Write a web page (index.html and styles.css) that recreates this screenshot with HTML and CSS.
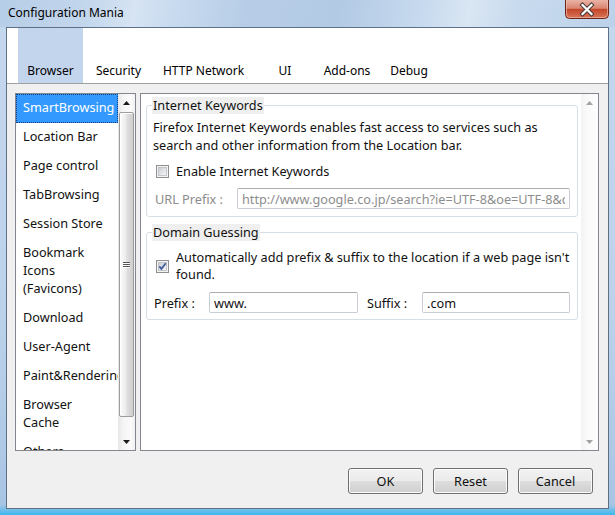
FILE: index.html
```html
<!DOCTYPE html>
<html>
<head>
<meta charset="utf-8">
<title>Configuration Mania</title>
<link rel="stylesheet" href="styles.css">
</head>
<body>
<div class="window">
  <div class="titlebar">
    <span class="title">Configuration Mania</span>
    <svg class="close" width="44" height="19" viewBox="0 0 44 19">
      <defs>
        <linearGradient id="cg" x1="0" y1="0" x2="0" y2="1">
          <stop offset="0" stop-color="#eab3a6"/>
          <stop offset="0.45" stop-color="#d98470"/>
          <stop offset="0.5" stop-color="#c4462a"/>
          <stop offset="1" stop-color="#d9775a"/>
        </linearGradient>
      </defs>
      <path d="M0.5 0 V14.5 Q0.5 18.5 4.5 18.5 H39.5 Q43.5 18.5 43.5 14.5 V0" fill="url(#cg)" stroke="#6a2517"/>
      <path d="M1.5 0 V14 Q1.5 17.5 5 17.5 H39 Q42.5 17.5 42.5 14 V0" fill="none" stroke="#f2c3b6" stroke-opacity="0.6"/>
      <path d="M17.5 5 L26.5 14 M26.5 5 L17.5 14" stroke="#4a3a36" stroke-width="4.2" stroke-linecap="square"/>
      <path d="M17.5 5 L26.5 14 M26.5 5 L17.5 14" stroke="#ffffff" stroke-width="2.2" stroke-linecap="square"/>
    </svg>
  </div>
  <div class="client">
    <div class="tabbar">
      <div class="tab tab-browser tab-sel">Browser</div>
      <div class="tab tab-security">Security</div>
      <div class="tab tab-http">HTTP Network</div>
      <div class="tab tab-ui">UI</div>
      <div class="tab tab-addons">Add-ons</div>
      <div class="tab tab-debug">Debug</div>
    </div>
    <div class="main">
      <div class="list">
        <div class="items">
          <div class="item item-sel">SmartBrowsing</div>
          <div class="item">Location Bar</div>
          <div class="item">Page control</div>
          <div class="item">TabBrowsing</div>
          <div class="item">Session Store</div>
          <div class="item">Bookmark<br>Icons<br>(Favicons)</div>
          <div class="item">Download</div>
          <div class="item">User-Agent</div>
          <div class="item">Paint&amp;Rendering</div>
          <div class="item">Browser<br>Cache</div>
          <div class="item">Others</div>
        </div>
        <div class="sb">
          <div class="sb-btn"><svg width="7" height="4" viewBox="0 0 7 4"><path d="M0 4 L3.5 0 L7 4 Z" fill="#1a1a1a"/></svg></div>
          <div class="sb-track">
            <div class="sb-thumb">
              <div class="grip"><i></i><i></i><i></i></div>
            </div>
          </div>
          <div class="sb-btn"><svg width="7" height="4" viewBox="0 0 7 4"><path d="M0 0 L3.5 4 L7 0 Z" fill="#1a1a1a"/></svg></div>
        </div>
      </div>
      <div class="panel">
        <div class="panel-content">
          <fieldset class="group">
            <legend>Internet Keywords</legend>
            <p class="desc">Firefox Internet Keywords enables fast access to services such as<br>search and other information from the Location bar.</p>
            <div class="check-row">
              <svg class="cb" width="13" height="13" viewBox="0 0 13 13">
                <defs>
                  <linearGradient id="cbg1" x1="0" y1="0" x2="1" y2="1">
                    <stop offset="0" stop-color="#c9ccd2"/>
                    <stop offset="1" stop-color="#f7f7f7"/>
                  </linearGradient>
                </defs>
                <rect x="0.5" y="0.5" width="12" height="12" fill="#f4f4f4" stroke="#8f8f8f"/>
                <rect x="2.5" y="2.5" width="8" height="8" fill="url(#cbg1)" stroke="#b8bcc2" stroke-width="0.8"/>
              </svg>
              <span class="check-label">Enable Internet Keywords</span>
            </div>
            <div class="field-row field-row-url">
              <span class="flabel flabel-url disabled">URL Prefix :</span>
              <input class="tbox tbox-url" type="text" value="http://www.google.co.jp/search?ie=UTF-8&amp;oe=UTF-8&amp;q=" readonly>
            </div>
          </fieldset>
          <fieldset class="group group-domain">
            <legend>Domain Guessing</legend>
            <div class="check-row check-row-multi">
              <svg class="cb" width="13" height="13" viewBox="0 0 13 13">
                <defs>
                  <linearGradient id="cbg2" x1="0" y1="0" x2="1" y2="1">
                    <stop offset="0" stop-color="#c9ccd2"/>
                    <stop offset="1" stop-color="#f7f7f7"/>
                  </linearGradient>
                </defs>
                <rect x="0.5" y="0.5" width="12" height="12" fill="#f4f4f4" stroke="#8f8f8f"/>
                <rect x="2.5" y="2.5" width="8" height="8" fill="url(#cbg2)" stroke="#b8bcc2" stroke-width="0.8"/>
                <path d="M3.3 6.4 L5.4 8.8 L9.8 3.2" fill="none" stroke="#3d5a9c" stroke-width="1.7"/>
              </svg>
              <span class="check-label check-label-multi">Automatically add prefix &amp; suffix to the location if a web page isn't<br>found.</span>
            </div>
            <div class="field-row field-row-prefix">
              <span class="flabel flabel-prefix">Prefix :</span>
              <input class="tbox tbox-prefix" type="text" value="www." readonly>
              <span class="flabel flabel-suffix">Suffix :</span>
              <input class="tbox tbox-suffix" type="text" value=".com" readonly>
            </div>
          </fieldset>
        </div>
        <div class="sb sb-off">
          <div class="sb-btn"><svg width="7" height="4" viewBox="0 0 7 4"><path d="M0 4 L3.5 0 L7 4 Z" fill="#a2a2a2"/></svg></div>
          <div class="sb-track"></div>
          <div class="sb-btn"><svg width="7" height="4" viewBox="0 0 7 4"><path d="M0 0 L3.5 4 L7 0 Z" fill="#a2a2a2"/></svg></div>
        </div>
      </div>
    </div>
    <div class="buttons">
      <div class="btn">OK</div>
      <div class="btn">Reset</div>
      <div class="btn">Cancel</div>
    </div>
  </div>
</div>
</body>
</html>
```

FILE: styles.css
```css
* { box-sizing: border-box; }
html, body { margin: 0; padding: 0; }
body {
  width: 615px;
  height: 515px;
  overflow: hidden;
  font-family: "Noto Sans", "DejaVu Sans", sans-serif;
  font-size: 12.7px;
  color: #000;
  background: #b9d0ea;
}
.window {
  width: 615px;
  height: 515px;
  display: flex;
  flex-direction: column;
  background: linear-gradient(to bottom, #c4d8ee 0%, #bcd2eb 60%, #a9c5e4 98%, #3ab7ef 100%);
}
.titlebar {
  height: 27px;
  flex: none;
  display: flex;
  align-items: flex-start;
  background: linear-gradient(100deg, #b7cee8 0%, #c2d6ec 14%, #d6e4f3 22%, #c9dbef 28%, #b7cde7 40%, #b3cae5 55%, #c6d9ee 68%, #d9e6f3 76%, #c8daee 84%, #bcd2ea 100%);
}
.title {
  margin: 5px 0 0 8px;
  font-size: 12px;
  line-height: 16px;
  color: #000;
}
.close {
  margin-left: auto;
  margin-right: 6px;
  display: block;
  flex: none;
}
.client {
  margin: 0 6px;
  height: 482px;
  border: 1px solid #5e7086;
  background: #f0f0f0;
  display: flex;
  flex-direction: column;
}
.tabbar {
  height: 56px;
  flex: none;
  display: flex;
  padding-left: 11px;
  background: #fff;
  border-bottom: 1px solid #a0a0a0;
}
.tab {
  height: 55px;
  display: flex;
  align-items: flex-end;
  justify-content: center;
  padding-bottom: 4px;
  font-size: 12px;
  line-height: 16px;
  white-space: nowrap;
}
.tab-sel { background: #c3d4ed; }
.tab-browser { width: 65px; }
.tab-security { width: 71px; }
.tab-http { width: 99px; }
.tab-ui { width: 64px; }
.tab-addons { width: 60px; }
.tab-debug { width: 64px; }

.main {
  display: flex;
  gap: 4px;
  padding: 9px 9px 0 8px;
  flex: none;
}
.list {
  width: 121px;
  height: 358px;
  border: 1px solid #828790;
  background: #fff;
  display: flex;
}
.items {
  flex: 1;
  overflow: hidden;
}
.item {
  padding: 3px 0 6px 6px;
  border: 1px solid transparent;
  line-height: 18px;
  white-space: nowrap;
  color: #111;
}
.item-sel {
  background: #3399ff;
  color: #fff;
  border: 1px dotted #0d3f7a;
}
.sb {
  width: 17px;
  flex: none;
  display: flex;
  flex-direction: column;
  background: linear-gradient(to right, #e6e6e6 0%, #f3f3f3 25%, #fbfbfb 75%, #f1f1f1 100%);
}
.sb-btn {
  height: 17px;
  flex: none;
  display: flex;
  align-items: center;
  justify-content: center;
}
.sb-btn svg { display: block; }
.sb-track {
  flex: 1;
  padding: 1px 1px 0 1px;
}
.sb-thumb {
  height: 305px;
  border: 1px solid #9d9d9d;
  border-radius: 2px;
  background: linear-gradient(to right, #fbfbfb 0%, #eeeeee 40%, #dcdcdc 60%, #cfcfcf 100%);
  box-shadow: inset 1px 1px 0 #ffffff;
  display: flex;
  align-items: center;
  justify-content: center;
}
.grip {
  display: flex;
  flex-direction: column;
  gap: 1px;
}
.grip i {
  display: block;
  width: 7px;
  height: 1px;
  background: #555;
  box-shadow: 0 1px 0 #fff;
}
.sb-off {
  background: linear-gradient(to right, #f3f3f3 0%, #fafafa 40%, #fdfdfd 100%);
}

.panel {
  flex: 1;
  height: 358px;
  border: 1px solid #828790;
  background: #fff;
  display: flex;
}
.panel-content {
  flex: 1;
  padding: 3px 3px 0 5px;
}
.group {
  margin: 0;
  padding: 0 6px 7px 6px;
  border: 1px solid #d5dfe5;
  border-radius: 3px;
}
.group-domain {
  margin-top: 7px;
  padding-bottom: 6px;
}
.group legend {
  padding: 0 1px;
  margin-left: -1px;
  line-height: 17px;
  background: #efefef;
  color: #111;
}
.desc {
  margin: 4px 0 0 0;
  line-height: 18px;
  white-space: nowrap;
  color: #111;
}
.check-row {
  display: flex;
  align-items: center;
  margin-top: 8px;
  height: 18px;
}
.check-row-multi {
  height: auto;
  margin-top: 8px;
}
.cb {
  display: block;
  flex: none;
  margin-left: 3px;
  margin-right: 7px;
}
.check-label {
  line-height: 18px;
  white-space: nowrap;
  color: #111;
}
.check-label-multi { line-height: 17px; }
.field-row {
  display: flex;
  align-items: center;
  height: 21px;
}
.field-row-url { margin-top: 8px; }
.field-row-prefix { margin-top: 9px; }
.flabel {
  flex: none;
  white-space: nowrap;
  color: #111;
}
.flabel.disabled { color: #8d8d8d; }
.flabel-url { width: 84px; padding-left: 2px; }
.flabel-prefix { width: 56px; padding-left: 1px; }
.flabel-suffix { width: 55px; margin-left: 9px; }
.tbox {
  height: 21px;
  border: 1px solid #c9ced6;
  border-top-color: #abadb3;
  border-radius: 2px;
  background: #fff;
  padding: 0 4px;
  font-family: "Noto Sans", "DejaVu Sans", sans-serif;
  font-size: 12.7px;
  color: #111;
  outline: none;
  margin: 0;
}
.tbox-url { width: 333px; color: #8d8d8d; }
.tbox-prefix { width: 149px; }
.tbox-suffix { width: 148px; }

.buttons {
  display: flex;
  justify-content: flex-end;
  gap: 10px;
  padding-right: 15px;
  margin-top: 17px;
}
.btn {
  width: 75px;
  height: 26px;
  border: 1px solid #707070;
  border-radius: 3px;
  background: linear-gradient(to bottom, #f2f2f2 0%, #ebebeb 48%, #dddddd 52%, #cfcfcf 100%);
  box-shadow: inset 0 0 0 1px #fbfbfb;
  display: flex;
  align-items: center;
  justify-content: center;
  line-height: 16px;
  color: #111;
}
```
